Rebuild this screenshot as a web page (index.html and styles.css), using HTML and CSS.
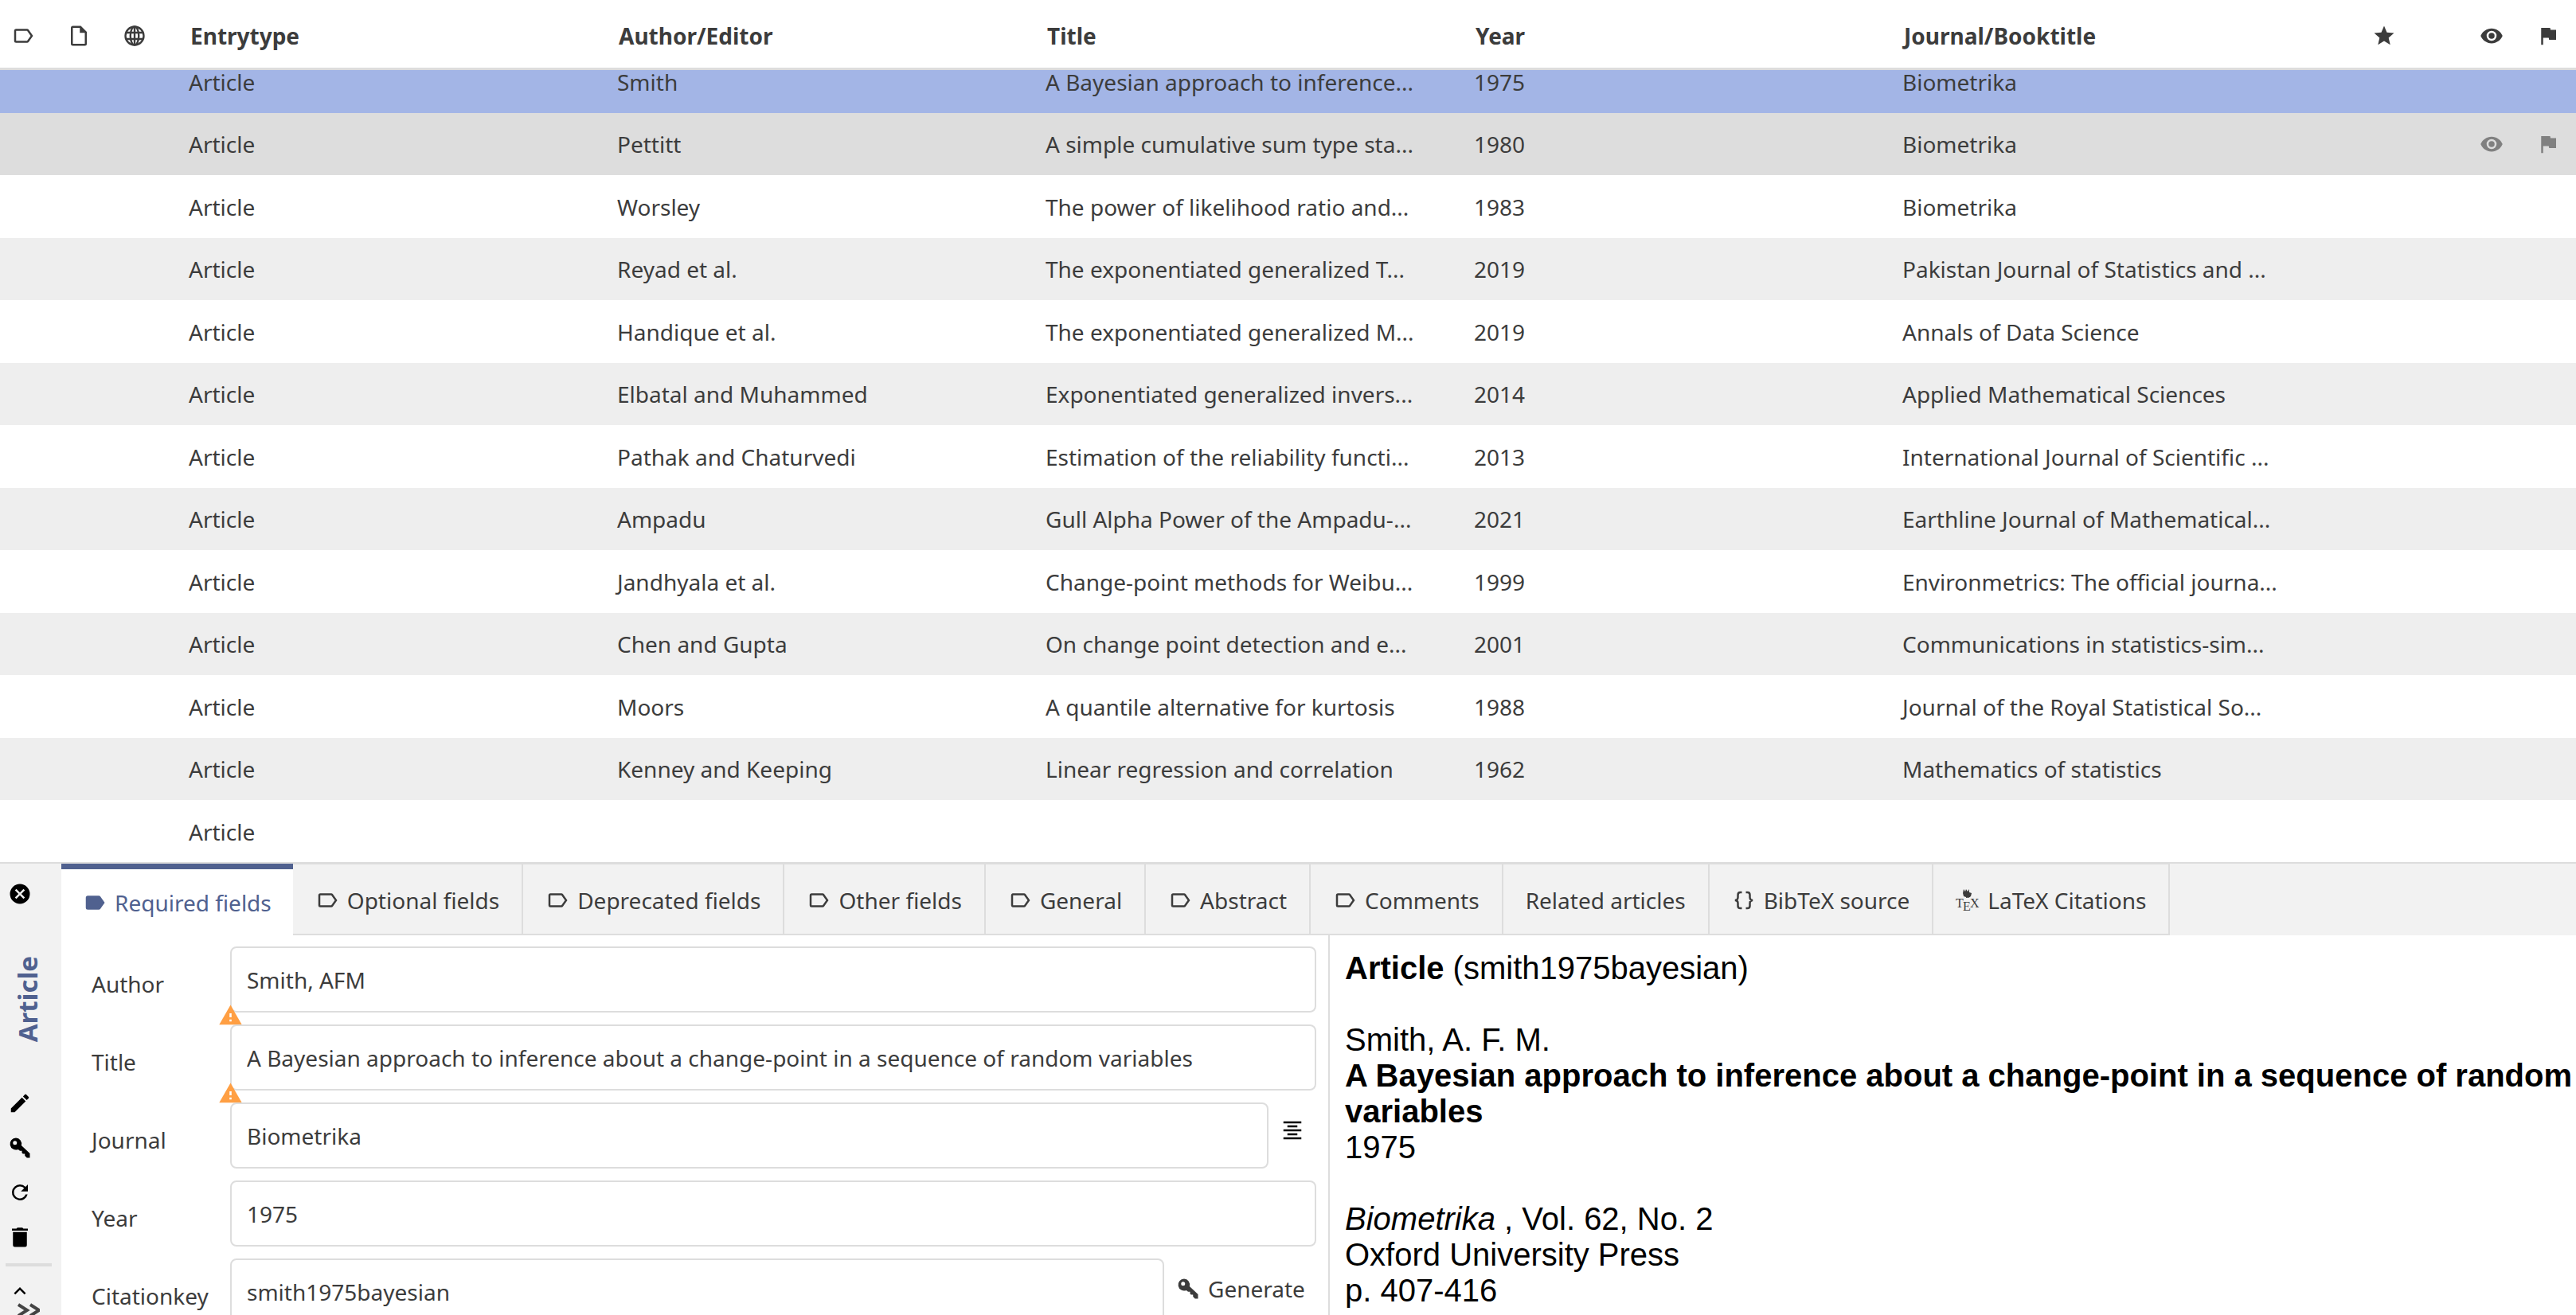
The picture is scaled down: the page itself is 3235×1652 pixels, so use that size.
FILE: index.html
```html
<!DOCTYPE html>
<html lang="en">
<head>
<meta charset="utf-8">
<title>Library</title>
<link rel="stylesheet" href="styles.css">
</head>
<body>
<svg class="sprite" aria-hidden="true">
<symbol id="label-outline" viewBox="0 0 24 24"><path fill-rule="evenodd" d="M17.630 5.840C17.270 5.330 16.670 5 16 5H5a2 2 0 0 0-2 2v10a2 2 0 0 0 2 2h11c.670 0 1.270-.340 1.630-.850L22 12l-4.370-6.160ZM16 17H5V7h11l3.550 5L16 17Z"/></symbol>
<symbol id="label" viewBox="0 0 24 24"><path d="M17.630 5.840C17.270 5.330 16.670 5 16 5H5a2 2 0 0 0-2 2v10a2 2 0 0 0 2 2h11c.670 0 1.270-.340 1.630-.850L22 12l-4.370-6.160Z"/></symbol>
<symbol id="file" viewBox="0 0 24 24"><path fill-rule="evenodd" d="M6 2a2 2 0 0 0-2 2v16a2 2 0 0 0 2 2h12a2 2 0 0 0 2-2V8l-6-6H6Zm0 2h7v5h5v11H6V4Z"/></symbol>
<symbol id="globe" viewBox="0 0 24 24"><g fill="none" stroke="currentColor" stroke-width="1.900"><circle cx="12" cy="12" r="9.200"/><ellipse cx="12" cy="12" rx="4.200" ry="9.200"/><path d="M12 3v18M3.500 8.800h17M3.500 15.200h17"/></g></symbol>
<symbol id="star" viewBox="0 0 24 24"><path d="M12 17.270 18.180 21l-1.640-7.030L22 9.240l-7.190-.620L12 2 9.190 8.620 2 9.240l5.450 4.730L5.820 21 12 17.270Z"/></symbol>
<symbol id="eye" viewBox="0 0 24 24"><path fill-rule="evenodd" d="M12 9a3 3 0 1 0 0 6 3 3 0 0 0 0-6Zm0 8a5 5 0 1 1 0-10 5 5 0 0 1 0 10Zm0-12.500C7 4.500 2.730 7.610 1 12c1.730 4.390 6 7.500 11 7.500s9.270-3.110 11-7.500c-1.730-4.390-6-7.500-11-7.500Z"/></symbol>
<symbol id="flag" viewBox="0 0 24 24"><path d="M14.400 6 14 4H5v17h2v-7h5.600l.400 2h7V6h-5.600Z"/></symbol>
<symbol id="close" viewBox="0 0 24 24"><path d="M12 2a10 10 0 1 0 0 20 10 10 0 0 0 0-20Zm5 13.590L15.590 17 12 13.410 8.410 17 7 15.590 10.590 12 7 8.410 8.410 7 12 10.590 15.590 7 17 8.410 13.410 12 17 15.590Z"/></symbol>
<symbol id="pencil" viewBox="0 0 24 24"><path d="M20.710 7.040c.390-.390.390-1.040 0-1.410l-2.340-2.340c-.370-.390-1.020-.390-1.410 0l-1.840 1.830 3.750 3.750 1.840-1.830ZM3 17.250V21h3.750L17.810 9.930l-3.750-3.750L3 17.250Z"/></symbol>
<symbol id="key" viewBox="0 0 24 24"><path fill-rule="evenodd" d="M8 2a6 6 0 1 0 2.200 11.600L12 15h2v2l1 1h2v2l2 2h3v-4.500l-8.500-8A6 6 0 0 0 8 2ZM7 5a2 2 0 1 1 0 4 2 2 0 0 1 0-4Z"/></symbol>
<symbol id="refresh" viewBox="0 0 24 24"><path d="M17.650 6.350A7.960 7.960 0 0 0 12 4a8 8 0 1 0 7.730 10h-2.080A6 6 0 1 1 12 6c1.660 0 3.140.690 4.220 1.780L13 11h7V4l-2.350 2.350Z"/></symbol>
<symbol id="trash" viewBox="0 0 24 24"><path d="M20 3.500h-4.500l-1-1h-5l-1 1H4v2h16v-2ZM5 20a2 2 0 0 0 2 2h10a2 2 0 0 0 2-2V7H5v13Z"/></symbol>
<symbol id="up" viewBox="0 0 24 24"><path d="M7.410 15.410 12 10.830l4.590 4.580L18 14l-6-6-6 6 1.410 1.410Z"/></symbol>
<symbol id="warning" viewBox="0 0 24 24"><path d="M1 21h22L12 2 1 21Z"/><path fill="#fff" d="M11 10h2v4h-2zM11 16h2v2h-2z"/></symbol>
<symbol id="lines" viewBox="0 0 24 24"><path d="M3 3h18v2H3V3Zm4 4h10v2H7V7Zm-4 4h18v2H3v-2Zm4 4h10v2H7v-2Zm-4 4h18v2H3v-2Z"/></symbol>
<symbol id="braces" viewBox="0 0 24 24"><path fill="none" stroke="currentColor" stroke-width="2" d="M10 4H8.500Q6 4 6 6.500v2.500q0 3-3 3 3 0 3 3v2.500Q6 20 8.500 20H10M14 4h1.500Q18 4 18 6.500v2.500q0 3 3 3-3 0-3 3v2.500q0 2.500-2.500 2.500H14"/></symbol>
</svg>

<main class="app">
<section class="library" aria-label="Entries">
<table class="entries">
<colgroup><col class="c-first"><col class="c-icon"><col class="c-icon"><col><col><col><col><col><col class="c-rank"><col class="c-icon"><col class="c-last"></colgroup>
<thead><tr>
<th><svg class="icon"><use href="#label-outline"/></svg></th>
<th><svg class="icon"><use href="#file"/></svg></th>
<th><svg class="icon"><use href="#globe"/></svg></th>
<th class="t">Entrytype</th><th class="t">Author/Editor</th><th class="t">Title</th><th class="t">Year</th><th class="t">Journal/Booktitle</th>
<th><svg class="icon"><use href="#star"/></svg></th>
<th><svg class="icon"><use href="#eye"/></svg></th>
<th><svg class="icon"><use href="#flag"/></svg></th>
</tr></thead>
<tbody>
<tr class="selected"><td></td><td></td><td></td><td class="t">Article</td><td class="t">Smith</td><td class="t">A Bayesian approach to inference...</td><td class="t">1975</td><td class="t">Biometrika</td><td></td><td></td><td></td></tr>
<tr class="hovered"><td></td><td></td><td></td><td class="t">Article</td><td class="t">Pettitt</td><td class="t">A simple cumulative sum type sta...</td><td class="t">1980</td><td class="t">Biometrika</td><td></td><td><svg class="icon"><use href="#eye"/></svg></td><td><svg class="icon"><use href="#flag"/></svg></td></tr>
<tr><td></td><td></td><td></td><td class="t">Article</td><td class="t">Worsley</td><td class="t">The power of likelihood ratio and...</td><td class="t">1983</td><td class="t">Biometrika</td><td></td><td></td><td></td></tr>
<tr><td></td><td></td><td></td><td class="t">Article</td><td class="t">Reyad et al.</td><td class="t">The exponentiated generalized T...</td><td class="t">2019</td><td class="t">Pakistan Journal of Statistics and ...</td><td></td><td></td><td></td></tr>
<tr><td></td><td></td><td></td><td class="t">Article</td><td class="t">Handique et al.</td><td class="t">The exponentiated generalized M...</td><td class="t">2019</td><td class="t">Annals of Data Science</td><td></td><td></td><td></td></tr>
<tr><td></td><td></td><td></td><td class="t">Article</td><td class="t">Elbatal and Muhammed</td><td class="t">Exponentiated generalized invers...</td><td class="t">2014</td><td class="t">Applied Mathematical Sciences</td><td></td><td></td><td></td></tr>
<tr><td></td><td></td><td></td><td class="t">Article</td><td class="t">Pathak and Chaturvedi</td><td class="t">Estimation of the reliability functi...</td><td class="t">2013</td><td class="t">International Journal of Scientific ...</td><td></td><td></td><td></td></tr>
<tr><td></td><td></td><td></td><td class="t">Article</td><td class="t">Ampadu</td><td class="t">Gull Alpha Power of the Ampadu-...</td><td class="t">2021</td><td class="t">Earthline Journal of Mathematical...</td><td></td><td></td><td></td></tr>
<tr><td></td><td></td><td></td><td class="t">Article</td><td class="t">Jandhyala et al.</td><td class="t">Change-point methods for Weibu...</td><td class="t">1999</td><td class="t">Environmetrics: The official journa...</td><td></td><td></td><td></td></tr>
<tr><td></td><td></td><td></td><td class="t">Article</td><td class="t">Chen and Gupta</td><td class="t">On change point detection and e...</td><td class="t">2001</td><td class="t">Communications in statistics-sim...</td><td></td><td></td><td></td></tr>
<tr><td></td><td></td><td></td><td class="t">Article</td><td class="t">Moors</td><td class="t">A quantile alternative for kurtosis</td><td class="t">1988</td><td class="t">Journal of the Royal Statistical So...</td><td></td><td></td><td></td></tr>
<tr><td></td><td></td><td></td><td class="t">Article</td><td class="t">Kenney and Keeping</td><td class="t">Linear regression and correlation</td><td class="t">1962</td><td class="t">Mathematics of statistics</td><td></td><td></td><td></td></tr>
<tr><td></td><td></td><td></td><td class="t">Article</td><td></td><td></td><td></td><td></td><td></td><td></td><td></td></tr>
</tbody>
</table>
</section>

<section class="editor" aria-label="Entry editor">
<aside class="side">
<button class="tool" aria-label="Close"><svg class="icon"><use href="#close"/></svg></button>
<span class="kind">Article</span>
<div class="tools">
<button class="tool" aria-label="Edit type"><svg class="icon"><use href="#pencil"/></svg></button>
<button class="tool" aria-label="Generate key"><svg class="icon"><use href="#key"/></svg></button>
<button class="tool" aria-label="Refresh"><svg class="icon"><use href="#refresh"/></svg></button>
<button class="tool" aria-label="Delete"><svg class="icon"><use href="#trash"/></svg></button>
</div>
<hr class="rule">
<button class="tool" aria-label="Previous"><svg class="icon"><use href="#up"/></svg></button>
<button class="more" aria-label="More"><svg viewBox="0 0 28 24"><path d="M1 2l11 7-11 7M16 2l11 7-11 7" fill="none" stroke="currentColor" stroke-width="4"/></svg></button>
</aside>
<div class="main">
<nav class="tabs" role="tablist">
<button class="tab active" role="tab"><svg class="icon"><use href="#label"/></svg>Required fields</button>
<button class="tab" role="tab"><svg class="icon"><use href="#label-outline"/></svg>Optional fields</button>
<button class="tab" role="tab"><svg class="icon"><use href="#label-outline"/></svg>Deprecated fields</button>
<button class="tab" role="tab"><svg class="icon"><use href="#label-outline"/></svg>Other fields</button>
<button class="tab" role="tab"><svg class="icon"><use href="#label-outline"/></svg>General</button>
<button class="tab" role="tab"><svg class="icon"><use href="#label-outline"/></svg>Abstract</button>
<button class="tab" role="tab"><svg class="icon"><use href="#label-outline"/></svg>Comments</button>
<button class="tab" role="tab">Related articles</button>
<button class="tab" role="tab"><svg class="icon"><use href="#braces"/></svg>BibTeX source</button>
<button class="tab" role="tab"><svg class="icon tex-icon" viewBox="0 0 30 30"><path d="M10 1l2 3 1-3 2 3 2-3v4l3 1-1 4-3 2-3-1-3-1-1-4zM13 8l6-2-1 5-5 1z"/><text class="tex" x="0" y="24">T</text><text class="tex" x="9" y="28">E</text><text class="tex" x="18" y="24">X</text></svg>LaTeX Citations</button>
</nav>
<div class="body">
<form class="form">
<label for="author">Author</label><div class="field"><input id="author" value="Smith, AFM"><svg class="badge"><use href="#warning"/></svg></div>
<label for="title">Title</label><div class="field"><input id="title" value="A Bayesian approach to inference about a change-point in a sequence of random variables"><svg class="badge"><use href="#warning"/></svg></div>
<label for="journal">Journal</label><div class="field"><input id="journal" value="Biometrika"><button type="button" class="list" aria-label="Abbreviate"><svg class="icon"><use href="#lines"/></svg></button></div>
<label for="year">Year</label><div class="field"><input id="year" value="1975"></div>
<label for="citationkey">Citationkey</label><div class="field"><input id="citationkey" value="smith1975bayesian"><button type="button" class="generate"><svg class="icon"><use href="#key"/></svg>Generate</button></div>
</form>
<article class="preview">
<p><b>Article</b> (smith1975bayesian)</p>
<p>Smith, A. F. M.<br><b>A Bayesian approach to inference about a change-point in a sequence of random variables</b><br>1975</p>
<p><i>Biometrika</i> , Vol. 62, No. 2<br>Oxford University Press<br>p. 407-416</p>
</article>
</div>
</div>
</section>
</main>
</body>
</html>
```
FILE: styles.css
```css
* { box-sizing: border-box; }
html, body { height: 100%; }
body { margin: 0; background: #fff; color: #3c3c3c; font: 28px/40px "Noto Sans", "Open Sans", sans-serif; overflow: hidden; }
button, input { font: inherit; color: inherit; }
button { border: 0; background: none; padding: 0; }
.sprite { position: absolute; width: 0; height: 0; }
.icon { width: 30px; height: 30px; fill: currentColor; flex: none; display: block; }

.app { display: grid; grid-template-rows: 1083fr 569fr; height: 100vh; }
.library { overflow: hidden; min-height: 0; }
.entries { width: 100%; table-layout: fixed; border-collapse: separate; border-spacing: 0; }
.c-first { width: 64px; }
.c-icon { width: 70px; }
.c-rank { width: 200px; }
.c-last { width: 71px; }
th { height: 88px; padding: 4px 0 0; border-bottom: 3px solid #ddd; }
th:first-child { padding-right: 6px; }
td { height: 78px; padding: 0; line-height: 30px; }
th .icon, td .icon { margin: 0 auto; }
.t { padding-left: 33px; text-align: left; white-space: nowrap; }
th.t { padding-left: 35px; }
tbody tr:nth-child(odd) td { height: 79px; }
tbody tr:nth-child(even) { background: #eee; }
tbody tr.selected { background: #a3b5e6; }
tbody tr.selected td { height: 54px; padding-bottom: 24px; }
tbody tr.hovered { background: #ddd; }
.hovered .icon { color: #808080; }

.editor { display: flex; min-height: 0; overflow: hidden; border-top: 2px solid #ddd; }
.side { width: 77px; flex: none; background: #f2f2f2; color: #000; padding-top: 23px; display: flex; flex-direction: column; align-items: flex-start; }
.tool { padding-left: 10px; height: 30px; flex: none; }
.kind { writing-mode: vertical-rl; transform: rotate(180deg); height: 110px; white-space: nowrap; color: #50618f; font-weight: 700; font-size: 33px; line-height: 40px; margin: 63px 0 0 15px; }
.tools { display: flex; flex-direction: column; gap: 26px; margin-top: 62px; }
.rule { width: 58px; height: 4px; flex: none; border: 0; background: #ddd; margin: 18px 0 0 7px; }
.rule + .tool { margin-top: 16px; }
.more { flex: none; color: #444; margin-left: 22px; width: 28px; height: 24px; }
.more svg { display: block; width: 28px; height: 24px; }

.main { flex: 1; min-width: 0; display: flex; flex-direction: column; }
.tabs { display: flex; flex: none; height: 90px; background: #f2f2f2; }
.tab { display: flex; align-items: center; gap: 10px; padding: 2px 28px 0; white-space: nowrap; border: solid #ddd; border-width: 1px 2px 2px 0; }
.tab.active { background: #fff; color: #50618f; border: 0; border-top: 7px solid #50618f; padding: 0 27px; }
.tex-icon { overflow: visible; }
.tex { font: 16px/16px "Liberation Serif", serif; }

.body { flex: 1; min-height: 0; display: grid; grid-template-columns: 1593fr 1565fr; }
.form { display: grid; grid-template-columns: auto 1fr; grid-auto-rows: 83px; gap: 15px 12px; padding: 14px 15px 0 38px; border-right: 2px solid #ddd; align-items: center; }
.form label { width: 162px; padding-top: 10px; }
.field { position: relative; display: flex; }
.field input { flex: 1; min-width: 0; height: 83px; border: 2px solid #ddd; border-radius: 8px; background: #fff; padding: 0 19px; }
.badge { position: absolute; left: -15px; bottom: -19px; width: 31px; height: 31px; fill: #ff9f43; }
.list { width: 60px; color: #000; padding: 0 0 14px 15px; }
.generate { width: 191px; display: flex; align-items: center; gap: 10px; padding: 0 0 8px 15px; }
.preview { padding: 19px 0 0 19px; color: #000; font: 40px/45px "Liberation Sans", Arial, sans-serif; }
.preview p { margin: 0 0 45px; }
```
